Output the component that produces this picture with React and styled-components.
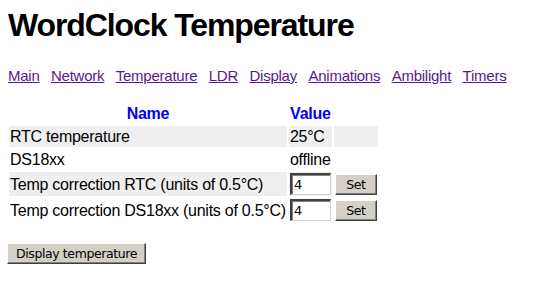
import React from "react";
import styled, { createGlobalStyle } from "styled-components";

const links = ["Main", "Network", "Temperature", "LDR", "Display", "Animations", "Ambilight", "Timers"];

const rows = [
  { name: "RTC temperature", value: "25°C", shaded: true },
  { name: "DS18xx", value: "offline" },
  { name: "Temp correction RTC (units of 0.5°C)", input: "4", shaded: true },
  { name: "Temp correction DS18xx (units of 0.5°C)", input: "4" },
];

const App = () => {
  return (
    <>
      <GlobalStyle />
      <Page>
        <Title>WordClock Temperature</Title>
        <Nav>
          {links.map((l) => (
            <NavLink key={l} href="#">
              {l}
            </NavLink>
          ))}
        </Nav>
        <Table>
          <thead>
            <tr>
              <Th>Name</Th>
              <Th>Value</Th>
              <Th />
            </tr>
          </thead>
          <tbody>
            {rows.map((r) => (
              <tr key={r.name}>
                <Td $shaded={r.shaded}>{r.name}</Td>
                <Td $shaded={r.shaded}>
                  {r.input ? <NumInput defaultValue={r.input} /> : r.value}
                </Td>
                <Td $shaded={r.shaded && !r.input}>
                  {r.input && <Button>Set</Button>}
                </Td>
              </tr>
            ))}
          </tbody>
        </Table>
        <WideButton>Display temperature</WideButton>
      </Page>
    </>
  );
};

export default App;

const GlobalStyle = createGlobalStyle`
  body {
    margin: 0;
    background: #ffffff;
    font-family: "Liberation Sans", Arial, sans-serif;
    color: #000000;
  }
`;

const Page = styled.div`
  padding: 7px 8px;
`;

const Title = styled.h1`
  margin: 0 0 24px;
  font-size: 32px;
  letter-spacing: -1.1px;
  line-height: 36px;
  font-weight: bold;
`;

const Nav = styled.div`
  display: flex;
  gap: 11.5px;
  font-size: 15px;
  letter-spacing: -0.25px;
  line-height: 18px;
  margin-bottom: 17px;
`;

const NavLink = styled.a`
  color: #551a8b;
  text-decoration: underline;
`;

const Table = styled.table`
  border-spacing: 2px;
  margin-left: -1px;
  font-size: 16px;
  letter-spacing: -0.25px;
`;

const Th = styled.th`
  color: #0000ff;
  font-weight: bold;
  padding: 1px;
  line-height: 18px;
  text-align: center;
`;

const Td = styled.td`
  padding: 1px;
  line-height: 19px;
  background: ${(p) => (p.$shaded ? "#efefef" : "transparent")};
`;

const NumInput = styled.input`
  box-sizing: border-box;
  width: 41px;
  height: 22px;
  margin: 0;
  padding: 1px 2px;
  font: 13px "DejaVu Sans", Tahoma, sans-serif;
  background: #ffffff;
  border-style: solid;
  border-width: 2px 1px 1px 2px;
  border-color: #404040 #d4d0c8 #d4d0c8 #404040;
  outline: none;
  box-shadow: inset 1px 1px 0 #808080;
`;

const Button = styled.button`
  box-sizing: border-box;
  height: 21px;
  width: 42px;
  margin: 0;
  padding: 0 6px;
  font: 12.5px "DejaVu Sans", Tahoma, sans-serif;
  letter-spacing: -0.4px;
  color: #000000;
  background: #d4d0c8;
  border: 1px solid;
  border-color: #ffffff #404040 #404040 #ffffff;
  box-shadow: inset -1px -1px 0 #808080;
`;

const WideButton = styled(Button)`
  width: auto;
  height: 21px;
  padding: 0 8px;
  margin: 19px 0 0 -1px;
`;
